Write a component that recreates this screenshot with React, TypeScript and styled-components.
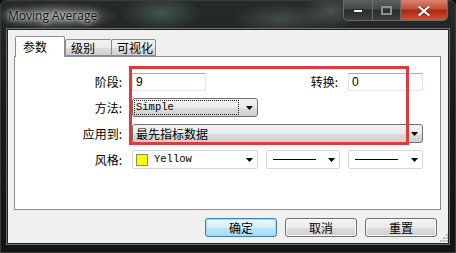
import React from 'react'
import styled, { createGlobalStyle } from 'styled-components'

const GlobalStyle = createGlobalStyle`
  html, body {
    margin: 0;
    padding: 0;
  }
  body {
    width: 456px;
    height: 253px;
    overflow: hidden;
    background: #111;
  }
`

const CJK = `'Noto Sans CJK SC', 'Noto Sans', sans-serif`
const MONO = `'Liberation Mono', 'DejaVu Sans Mono', monospace`

const Arrow = ({ color = '#000' }: { color?: string }) => (
  <svg width="7" height="4" viewBox="0 0 7 4">
    <path d="M0 0 H7 L3.5 4 Z" fill={color} />
  </svg>
)

const Window = () => {
  return (
    <Frame>
      <TitleBar>
        <Title>Moving Average</Title>
        <Caption>
          <CapButton $w={28}>
            <svg width="10" height="4" viewBox="0 0 10 4">
              <rect x="0.5" y="0.5" width="9" height="3" fill="#f4f4f4" stroke="#2a2a2a" strokeWidth="1" />
            </svg>
          </CapButton>
          <CapButton $w={27}>
            <svg width="11" height="9" viewBox="0 0 11 9">
              <rect x="1" y="1" width="9" height="7" fill="none" stroke="#8d9190" strokeWidth="2" />
            </svg>
          </CapButton>
          <CloseButton>
            <svg width="12" height="10" viewBox="0 0 12 10">
              <path d="M1.5 1 L10.5 9 M10.5 1 L1.5 9" stroke="#5a1a10" strokeWidth="3.6" strokeLinecap="square" />
              <path d="M1.5 1 L10.5 9 M10.5 1 L1.5 9" stroke="#fff" strokeWidth="2.2" strokeLinecap="square" />
            </svg>
          </CloseButton>
        </Caption>
      </TitleBar>

      <Client>
        <TabStrip>
          <Tab $active $w={50}>参数</Tab>
          <Tab $w={47}>级别</Tab>
          <Tab $w={45}>可视化</Tab>
        </TabStrip>

        <Panel>
          <Form>
            <Label>阶段:</Label>
            <TextInput>9</TextInput>
            <Label $col="4">转换:</Label>
            <TextInput>0</TextInput>

            <Label>方法:</Label>
            <Combo $span="2 / 4">
              <FocusText>Simple</FocusText>
              <Arrow />
            </Combo>

            <Label>应用到:</Label>
            <Combo $span="2 / 6">
              <ComboText>最先指标数据</ComboText>
              <Arrow />
            </Combo>

            <Label>风格:</Label>
            <WhiteCombo $span="2 / 4">
              <Swatch />
              <MonoText>Yellow</MonoText>
              <Arrow />
            </WhiteCombo>
            <WhiteCombo>
              <LineSample />
              <Arrow />
            </WhiteCombo>
            <WhiteCombo>
              <LineSample />
              <Arrow />
            </WhiteCombo>
          </Form>
          <Highlight />
        </Panel>

        <Footer>
          <Buttons>
            <Button $primary>确定</Button>
            <Button>取消</Button>
            <Button>重置</Button>
          </Buttons>
          <Grip>
            <svg width="8" height="8" viewBox="0 0 8 8">
              {[
                [6, 0], [6, 3], [3, 3], [6, 6], [3, 6], [0, 6],
              ].map(([x, y]) => (
                <rect key={`${x}-${y}`} x={x} y={y} width="2" height="2" fill="#b8b8b8" />
              ))}
            </svg>
          </Grip>
        </Footer>
      </Client>
    </Frame>
  )
}

const Frame = styled.div`
  width: 456px;
  height: 253px;
  display: flex;
  flex-direction: column;
  box-sizing: border-box;
  border: 1px solid #3a3d3c;
  border-radius: 6px 6px 0 0;
  background:
    radial-gradient(ellipse 62px 14px at 56px 15px, rgba(200, 205, 202, 0.5), transparent),
    radial-gradient(ellipse 40px 18px at 160px 12px, rgba(90, 120, 110, 0.55), transparent),
    radial-gradient(ellipse 50px 16px at 280px 18px, rgba(110, 130, 125, 0.4), transparent),
    radial-gradient(ellipse 30px 20px at 330px 10px, rgba(160, 170, 165, 0.3), transparent),
    linear-gradient(180deg, #262a28 0%, #181b1a 40%, #121413 100%);
  font-family: ${CJK};
`

const TitleBar = styled.div`
  height: 28px;
  display: flex;
  justify-content: space-between;
  align-items: flex-start;
  padding: 0 7px 0 7px;
`

const Title = styled.div`
  margin-top: 7px;
  font-family: 'Open Sans', 'Liberation Sans', sans-serif;
  font-size: 12px;
  line-height: 16px;
  color: #111;
  text-shadow:
    0 0 3px rgba(235, 238, 236, 0.95),
    0 0 6px rgba(220, 224, 222, 0.9),
    0 0 10px rgba(200, 205, 202, 0.7);
`

const Caption = styled.div`
  display: flex;
  margin-top: -2px;
  height: 21px;
  border: 1px solid #6a6d6c;
  border-top: none;
  border-radius: 0 0 5px 5px;
  overflow: hidden;
`

const CapButton = styled.div<{ $w: number }>`
  width: ${(p) => p.$w}px;
  display: flex;
  align-items: center;
  justify-content: center;
  padding-top: 2px;
  border-right: 1px solid #6a6d6c;
  background: linear-gradient(180deg, #5f6362 0%, #454948 45%, #2a2e2d 55%, #3a3e3d 100%);
`

const CloseButton = styled.div`
  width: 46px;
  display: flex;
  align-items: center;
  justify-content: center;
  padding-top: 2px;
  background: linear-gradient(180deg, #d98a78 0%, #c65039 45%, #ab2a12 55%, #cf5236 100%);
`

const Client = styled.div`
  flex: 1;
  display: flex;
  flex-direction: column;
  margin: 0 6px 8px 6px;
  padding: 6px 0 0 0;
  background: #f0f0f0;
  border: 1px solid #222;
  box-shadow: 0 0 0 1px #6b6e6d;
`

const TabStrip = styled.div`
  display: flex;
  align-items: flex-end;
  height: 20px;
  padding-left: 7px;
  position: relative;
  z-index: 1;
`

const Tab = styled.div<{ $active?: boolean; $w: number }>`
  width: ${(p) => p.$w}px;
  box-sizing: border-box;
  height: ${(p) => (p.$active ? 21 : 17)}px;
  margin-bottom: ${(p) => (p.$active ? -1 : 0)}px;
  margin-right: ${(p) => (p.$active ? 0 : -1)}px;
  padding-left: ${(p) => (p.$active ? 7 : 5)}px;
  border: 1px solid #898c95;
  border-bottom: ${(p) => (p.$active ? 'none' : '1px solid #898c95')};
  border-radius: 2px 2px 0 0;
  background: ${(p) => (p.$active ? '#fff' : 'linear-gradient(180deg, #f2f2f2 0%, #ebebeb 50%, #dddddd 51%, #cfcfcf 100%)')};
  font-size: 12px;
  line-height: ${(p) => (p.$active ? 19 : 16)}px;
  color: #000;
  white-space: nowrap;
`

const Panel = styled.div`
  position: relative;
  height: 154px;
  box-sizing: border-box;
  margin: 0 7px 0 6px;
  background: #fff;
  border: 1px solid #898c95;
`

const Form = styled.div`
  display: grid;
  grid-template-columns: 109px 74px 44px 74px 75px;
  grid-auto-rows: 19px;
  column-gap: 8px;
  row-gap: 7px;
  padding-top: 15px;
`

const Label = styled.div<{ $col?: string }>`
  grid-column: ${(p) => p.$col ?? '1'};
  text-align: right;
  padding-right: 2px;
  font-size: 12px;
  line-height: 19px;
  color: #000;
`

const TextInput = styled.div`
  align-self: center;
  height: 18px;
  box-sizing: border-box;
  padding-left: 3px;
  border: 1px solid #e3e9ef;
  border-top-color: #abadb3;
  border-left-color: #e2e3ea;
  font-family: 'Liberation Sans', Arial, sans-serif;
  font-size: 12px;
  line-height: 16px;
  color: #000;
`

const Combo = styled.div<{ $span?: string }>`
  grid-column: ${(p) => p.$span ?? 'auto'};
  display: flex;
  align-items: center;
  justify-content: space-between;
  box-sizing: border-box;
  padding: 0 4px 0 1px;
  border: 1px solid #707070;
  border-radius: 3px;
  background: linear-gradient(180deg, #f2f2f2 0%, #ebebeb 50%, #dddddd 51%, #cfcfcf 100%);
`

const FocusText = styled.div`
  flex: 0 0 105px;
  height: 15px;
  box-sizing: border-box;
  padding-left: 1px;
  border: 1px dotted #222;
  font-family: ${MONO};
  font-size: 10.5px;
  line-height: 13px;
  color: #000;
`

const ComboText = styled.div`
  padding-left: 2px;
  font-size: 12px;
  line-height: 17px;
  color: #000;
`

const WhiteCombo = styled.div<{ $span?: string }>`
  grid-column: ${(p) => p.$span ?? 'auto'};
  display: flex;
  align-items: center;
  gap: 6px;
  box-sizing: border-box;
  padding: 0 4px 0 3px;
  border: 1px solid #d6d6d6;
  border-radius: 2px;
  background: #fff;

  svg {
    margin-left: auto;
  }
`

const Swatch = styled.div`
  width: 12px;
  height: 12px;
  box-sizing: border-box;
  background: #ffff00;
  border: 1px solid #8c8c55;
`

const MonoText = styled.div`
  font-family: ${MONO};
  font-size: 10.5px;
  line-height: 17px;
  color: #000;
`

const LineSample = styled.div`
  width: 43px;
  height: 1px;
  margin-left: 3px;
  background: #000;
`

const Highlight = styled.div`
  position: absolute;
  left: 114px;
  top: 9px;
  width: 280px;
  height: 79px;
  box-sizing: border-box;
  border: 3px solid #e23a3c;
  pointer-events: none;
`

const Footer = styled.div`
  flex: 1;
  display: flex;
  justify-content: flex-end;
  padding: 8px 0 0 0;
`

const Buttons = styled.div`
  display: flex;
  gap: 8px;
  align-items: flex-start;
`

const Button = styled.div<{ $primary?: boolean }>`
  width: 72px;
  height: 19px;
  box-sizing: border-box;
  border: 1px solid ${(p) => (p.$primary ? '#3c7fb1' : '#707070')};
  border-radius: 3px;
  background: ${(p) =>
    p.$primary
      ? 'linear-gradient(180deg, #eaf6fd 0%, #d9f0fc 50%, #bee6fd 51%, #a7d9f5 100%)'
      : 'linear-gradient(180deg, #f2f2f2 0%, #ebebeb 50%, #dddddd 51%, #cfcfcf 100%)'};
  box-shadow: ${(p) => (p.$primary ? 'inset 0 0 0 1px #9fdcf6' : 'inset 0 0 0 1px #fcfcfc')};
  font-size: 12px;
  line-height: 17px;
  text-align: center;
  color: #000;
`

const Grip = styled.div`
  align-self: flex-end;
  display: flex;
  margin: 0 0 1px 3px;
  width: 8px;
`

export default function App() {
  return (
    <>
      <GlobalStyle />
      <Window />
    </>
  )
}
